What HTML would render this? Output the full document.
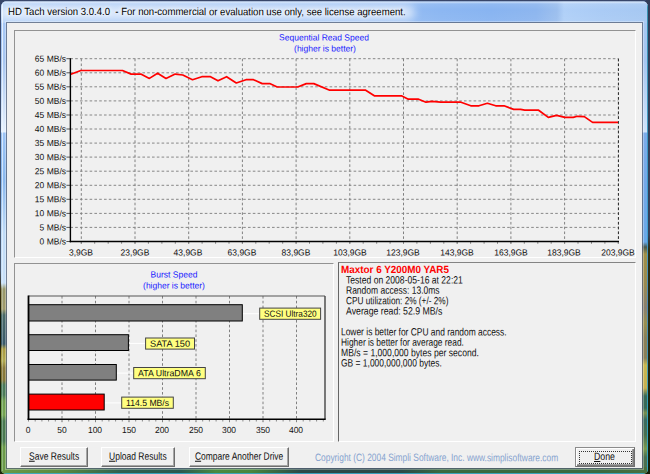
<!DOCTYPE html>
<html><head><meta charset="utf-8"><title>HD Tach</title>
<style>
html,body{margin:0;padding:0}
body{width:650px;height:474px;overflow:hidden;background:linear-gradient(#38466a 0,#3f5170 120px,#4a5a72 270px,#3a2c0a 292px,#0c1406 320px,#1a1a08 345px,#4a4010 360px,#1a2408 385px,#1a2a0a 474px);position:relative;font-family:"Liberation Sans",sans-serif;}
#bgR{position:absolute;left:646px;top:0;width:4px;height:474px;background:linear-gradient(#323c58 0,#36405a 235px,#2c2c10 250px,#20220c 380px,#141c06 474px)}
#frame{position:absolute;left:1px;top:1.25px;width:647px;height:472.35px;border-radius:6px 6px 5px 5px;overflow:hidden;background:#a8c8f0}
#fT{position:absolute;left:0;top:0;width:647px;height:23px;background:linear-gradient(rgba(60,78,115,.55) 0,rgba(255,255,255,.6) 1px,rgba(255,255,255,.3) 1.8px,rgba(255,255,255,.08) 3px,rgba(255,255,255,0) 9px,rgba(255,255,255,.06) 22px),linear-gradient(90deg,#a9caf6 0,#a0c4f5 200px,#94bcf3 400px,#8cb7f2 440px,#88b4f1 490px,#8db6ef 535px,#9cbfee 556px,#b0d0f8 563px,#aacbf5 600px,#a6c8f2 647px)}
#glow{position:absolute;left:-4px;top:4px;width:418px;height:15px;border-radius:8px;background:rgba(255,255,255,.62);filter:blur(4px)}
#fL{position:absolute;left:0;top:22px;width:7px;height:452px;background:linear-gradient(#a7c8f6 0,#a8c6f1 38px,#e6f1fe 109px,#9cc4f6 110px,#8ab8ee 158px,#c0dcf8 210px,#c8e0f8 260px,#98986a 266px,#a09a6a 286px,#4a6a68 292px,#3a5a6a 321px,#a89a40 326px,#b0a850 338px,#8a7a3a 345px,#867838 357px,#4a7a5a 362px,#4c7c58 372px,#70a050 378px,#74a450 392px,#4a7a50 398px,#4a7a50 418px,#6a9a48 424px,#6a9a48 452px)}
#fR{position:absolute;left:641px;top:22px;width:6px;height:452px;background:linear-gradient(#a6c8f2 0,#a6c6f1 38px,#d0e3fb 109px,#7cacea 110px,#74a8e8 160px,#6aa8e8 219px,#4a5a50 224px,#a09048 231px,#9a8a50 262px,#8a8070 285px,#9a9050 300px,#8a8058 315px,#8a8058 335px,#c8b850 342px,#c8b050 365px,#3a6a58 373px,#3a6a58 385px,#7a9050 390px,#3a6a60 397px,#4a7050 412px,#7a9a50 426px,#4a7050 434px,#4a7050 452px)}
#fB{position:absolute;left:0;top:466px;width:647px;height:7px;background:linear-gradient(90deg,#6a9a48 0,#5a8a40 60px,#2f6050 120px,#2a5a50 180px,#4a8a40 215px,#48863e 250px,#2a4a48 300px,#2a4a48 400px,#3a6a40 440px,#3a6a40 600px,#4a7040 647px)}
#fB:after{content:"";position:absolute;left:3px;right:3px;bottom:0;height:1px;background:#3aaed0;opacity:.85}
#fHl{position:absolute;left:0.6px;top:3px;width:1.2px;height:467px;background:linear-gradient(rgba(240,247,255,.85),rgba(240,247,255,.6) 250px,rgba(240,247,255,.3) 290px,rgba(240,247,255,.3))}
#fHr{position:absolute;left:645.6px;top:4px;width:1.4px;height:468px;background:linear-gradient(rgba(42,138,168,.9) 0,rgba(60,160,210,.9) 230px,rgba(60,140,200,.8) 300px,rgba(48,168,200,.9) 400px,rgba(48,168,200,.95) 468px)}
#client{position:absolute;left:7px;top:23px;width:635px;height:445px;background:#f0f0f0;box-shadow:0 0 0 1px rgba(62,75,98,.66),0 0 0 2px rgba(255,255,255,.3);}
.sunk{position:absolute;box-sizing:border-box;border:1px solid;border-width:1.2px 1px 1px 1.2px;border-color:#929292 #fff #fff #929292;}
svg{position:absolute;left:0;top:0}
.g{stroke:#808080;stroke-width:1;stroke-dasharray:2.6 2.2}
.gh{stroke:#7c7c7c;stroke-width:.9;stroke-dasharray:2.6 2.2}
.t{stroke:#555;stroke-width:1}
.mt{stroke:#8a8a8a;stroke-width:1}
.yl{position:absolute;left:16px;width:50px;text-align:right;transform-origin:100% 0;font-size:8.8px;line-height:12px;color:#111}
.xl{position:absolute;width:50px;text-align:center;transform-origin:50% 0;font-size:8.8px;line-height:12px;color:#111}
.ct{position:absolute;text-align:center;color:#1a1aff;font-size:8.8px;line-height:12px;width:200px;transform-origin:50% 0}
.bl{position:absolute;text-align:center;font-size:9.0px;line-height:12px;color:#111;white-space:nowrap}
.bx{position:absolute;width:40px;text-align:center;transform-origin:50% 0;font-size:8.8px;line-height:12px;color:#111}
.m{position:absolute;font-size:10.6px;line-height:14px;color:#111;white-space:pre;transform-origin:0 0}
.m u{text-decoration-thickness:0.9px;text-underline-offset:0.6px}
.btn{position:absolute;top:447px;height:19.5px;box-sizing:border-box;background:#f0f0f0;border:1px solid;border-color:#fff #6e6e6e #6e6e6e #fff;box-shadow:inset -1px -1px 0 #a6a6a6}
</style></head><body>
<div id="bgR"></div>
<div id="frame"><div id="fT"></div><div id="glow"></div><div id="fL"></div><div id="fR"></div><div id="fB"></div><div id="fHl"></div><div id="fHr"></div></div>
<div id="client"></div>
<div class="sunk" style="left:14px;top:30px;width:622px;height:228px"></div>
<div class="sunk" style="left:14px;top:262.5px;width:320px;height:179.5px"></div>
<div class="sunk" style="left:338.3px;top:262.4px;width:297.7px;height:179.6px;border-width:1.1px 1px 1px 1.8px;border-left-color:#666;border-top-color:#848484"></div>
<svg width="650" height="474" viewBox="0 0 650 474">
<line x1="66.4" y1="241.5" x2="70.4" y2="241.5" class="t"/>
<line x1="70.4" y1="227.4" x2="618.5" y2="227.4" class="gh"/>
<line x1="66.4" y1="227.4" x2="70.4" y2="227.4" class="t"/>
<line x1="70.4" y1="213.4" x2="618.5" y2="213.4" class="gh"/>
<line x1="66.4" y1="213.4" x2="70.4" y2="213.4" class="t"/>
<line x1="70.4" y1="199.3" x2="618.5" y2="199.3" class="gh"/>
<line x1="66.4" y1="199.3" x2="70.4" y2="199.3" class="t"/>
<line x1="70.4" y1="185.3" x2="618.5" y2="185.3" class="gh"/>
<line x1="66.4" y1="185.3" x2="70.4" y2="185.3" class="t"/>
<line x1="70.4" y1="171.2" x2="618.5" y2="171.2" class="gh"/>
<line x1="66.4" y1="171.2" x2="70.4" y2="171.2" class="t"/>
<line x1="70.4" y1="157.1" x2="618.5" y2="157.1" class="gh"/>
<line x1="66.4" y1="157.1" x2="70.4" y2="157.1" class="t"/>
<line x1="70.4" y1="143.1" x2="618.5" y2="143.1" class="gh"/>
<line x1="66.4" y1="143.1" x2="70.4" y2="143.1" class="t"/>
<line x1="70.4" y1="129.0" x2="618.5" y2="129.0" class="gh"/>
<line x1="66.4" y1="129.0" x2="70.4" y2="129.0" class="t"/>
<line x1="70.4" y1="115.0" x2="618.5" y2="115.0" class="gh"/>
<line x1="66.4" y1="115.0" x2="70.4" y2="115.0" class="t"/>
<line x1="70.4" y1="100.9" x2="618.5" y2="100.9" class="gh"/>
<line x1="66.4" y1="100.9" x2="70.4" y2="100.9" class="t"/>
<line x1="70.4" y1="86.8" x2="618.5" y2="86.8" class="gh"/>
<line x1="66.4" y1="86.8" x2="70.4" y2="86.8" class="t"/>
<line x1="70.4" y1="72.8" x2="618.5" y2="72.8" class="gh"/>
<line x1="66.4" y1="72.8" x2="70.4" y2="72.8" class="t"/>
<line x1="70.4" y1="58.7" x2="618.5" y2="58.7" class="gh"/>
<line x1="66.4" y1="58.7" x2="70.4" y2="58.7" class="t"/>
<line x1="81.3" y1="58.7" x2="81.3" y2="245.5" class="g"/>
<line x1="135.0" y1="58.7" x2="135.0" y2="245.5" class="g"/>
<line x1="188.7" y1="58.7" x2="188.7" y2="245.5" class="g"/>
<line x1="242.4" y1="58.7" x2="242.4" y2="245.5" class="g"/>
<line x1="296.1" y1="58.7" x2="296.1" y2="245.5" class="g"/>
<line x1="349.8" y1="58.7" x2="349.8" y2="245.5" class="g"/>
<line x1="403.5" y1="58.7" x2="403.5" y2="245.5" class="g"/>
<line x1="457.2" y1="58.7" x2="457.2" y2="245.5" class="g"/>
<line x1="510.9" y1="58.7" x2="510.9" y2="245.5" class="g"/>
<line x1="564.6" y1="58.7" x2="564.6" y2="245.5" class="g"/>
<line x1="618.3" y1="58.7" x2="618.3" y2="245.5" class="g"/>
<line x1="81.3" y1="241.5" x2="81.3" y2="243.8" class="mt"/>
<line x1="94.7" y1="241.5" x2="94.7" y2="243.8" class="mt"/>
<line x1="108.2" y1="241.5" x2="108.2" y2="243.8" class="mt"/>
<line x1="121.6" y1="241.5" x2="121.6" y2="243.8" class="mt"/>
<line x1="135.0" y1="241.5" x2="135.0" y2="243.8" class="mt"/>
<line x1="148.4" y1="241.5" x2="148.4" y2="243.8" class="mt"/>
<line x1="161.9" y1="241.5" x2="161.9" y2="243.8" class="mt"/>
<line x1="175.3" y1="241.5" x2="175.3" y2="243.8" class="mt"/>
<line x1="188.7" y1="241.5" x2="188.7" y2="243.8" class="mt"/>
<line x1="202.1" y1="241.5" x2="202.1" y2="243.8" class="mt"/>
<line x1="215.6" y1="241.5" x2="215.6" y2="243.8" class="mt"/>
<line x1="229.0" y1="241.5" x2="229.0" y2="243.8" class="mt"/>
<line x1="242.4" y1="241.5" x2="242.4" y2="243.8" class="mt"/>
<line x1="255.8" y1="241.5" x2="255.8" y2="243.8" class="mt"/>
<line x1="269.2" y1="241.5" x2="269.2" y2="243.8" class="mt"/>
<line x1="282.7" y1="241.5" x2="282.7" y2="243.8" class="mt"/>
<line x1="296.1" y1="241.5" x2="296.1" y2="243.8" class="mt"/>
<line x1="309.5" y1="241.5" x2="309.5" y2="243.8" class="mt"/>
<line x1="322.9" y1="241.5" x2="322.9" y2="243.8" class="mt"/>
<line x1="336.4" y1="241.5" x2="336.4" y2="243.8" class="mt"/>
<line x1="349.8" y1="241.5" x2="349.8" y2="243.8" class="mt"/>
<line x1="363.2" y1="241.5" x2="363.2" y2="243.8" class="mt"/>
<line x1="376.7" y1="241.5" x2="376.7" y2="243.8" class="mt"/>
<line x1="390.1" y1="241.5" x2="390.1" y2="243.8" class="mt"/>
<line x1="403.5" y1="241.5" x2="403.5" y2="243.8" class="mt"/>
<line x1="416.9" y1="241.5" x2="416.9" y2="243.8" class="mt"/>
<line x1="430.4" y1="241.5" x2="430.4" y2="243.8" class="mt"/>
<line x1="443.8" y1="241.5" x2="443.8" y2="243.8" class="mt"/>
<line x1="457.2" y1="241.5" x2="457.2" y2="243.8" class="mt"/>
<line x1="470.6" y1="241.5" x2="470.6" y2="243.8" class="mt"/>
<line x1="484.1" y1="241.5" x2="484.1" y2="243.8" class="mt"/>
<line x1="497.5" y1="241.5" x2="497.5" y2="243.8" class="mt"/>
<line x1="510.9" y1="241.5" x2="510.9" y2="243.8" class="mt"/>
<line x1="524.3" y1="241.5" x2="524.3" y2="243.8" class="mt"/>
<line x1="537.8" y1="241.5" x2="537.8" y2="243.8" class="mt"/>
<line x1="551.2" y1="241.5" x2="551.2" y2="243.8" class="mt"/>
<line x1="564.6" y1="241.5" x2="564.6" y2="243.8" class="mt"/>
<line x1="578.0" y1="241.5" x2="578.0" y2="243.8" class="mt"/>
<line x1="591.5" y1="241.5" x2="591.5" y2="243.8" class="mt"/>
<line x1="604.9" y1="241.5" x2="604.9" y2="243.8" class="mt"/>
<line x1="618.3" y1="241.5" x2="618.3" y2="243.8" class="mt"/>
<line x1="618.5" y1="58.7" x2="618.5" y2="241.5" class="g" style="stroke:#333"/>
<polyline points="70.8,74.3 80.9,70.5 122.5,70.5 131.1,74.1 140.8,74.1 149.4,78.4 157.6,73.3 166.0,78.4 175.2,74.1 182.8,75.0 192.5,79.7 201.8,76.7 210.5,76.7 218.0,80.8 226.6,76.7 236.3,83.0 246.0,79.7 253.5,79.7 262.2,83.6 269.7,83.6 277.2,87.0 297.7,87.0 306.3,83.6 313.8,83.6 329.7,90.2 365.7,90.2 374.3,95.8 401.4,95.8 408.3,99.2 418.6,99.2 426.0,102.2 432.0,101.4 440.6,102.2 461.0,102.2 470.8,105.8 479.0,105.8 487.4,103.3 495.7,105.8 504.0,105.8 513.7,109.4 520.6,109.4 524.8,110.2 538.6,110.2 548.3,117.4 556.6,115.4 565.0,117.4 573.2,117.4 577.4,116.3 584.3,116.6 592.6,122.4 618.0,122.4" fill="none" stroke="#f00" stroke-width="1.7" stroke-linejoin="round"/>
<line x1="70.4" y1="58.2" x2="70.4" y2="242.3" stroke="#000" stroke-width="1.4"/>
<line x1="69.7" y1="241.5" x2="619.0" y2="241.5" stroke="#000" stroke-width="1.6"/>
<line x1="62.0" y1="296" x2="62.0" y2="422.2" class="g"/>
<line x1="95.5" y1="296" x2="95.5" y2="422.2" class="g"/>
<line x1="129.0" y1="296" x2="129.0" y2="422.2" class="g"/>
<line x1="162.5" y1="296" x2="162.5" y2="422.2" class="g"/>
<line x1="196.0" y1="296" x2="196.0" y2="422.2" class="g"/>
<line x1="229.5" y1="296" x2="229.5" y2="422.2" class="g"/>
<line x1="263.0" y1="296" x2="263.0" y2="422.2" class="g"/>
<line x1="296.5" y1="296" x2="296.5" y2="422.2" class="g"/>
<line x1="28.5" y1="419.2" x2="28.5" y2="421.5" class="mt"/>
<line x1="35.2" y1="419.2" x2="35.2" y2="421.5" class="mt"/>
<line x1="41.9" y1="419.2" x2="41.9" y2="421.5" class="mt"/>
<line x1="48.6" y1="419.2" x2="48.6" y2="421.5" class="mt"/>
<line x1="55.3" y1="419.2" x2="55.3" y2="421.5" class="mt"/>
<line x1="62.0" y1="419.2" x2="62.0" y2="421.5" class="mt"/>
<line x1="68.7" y1="419.2" x2="68.7" y2="421.5" class="mt"/>
<line x1="75.4" y1="419.2" x2="75.4" y2="421.5" class="mt"/>
<line x1="82.1" y1="419.2" x2="82.1" y2="421.5" class="mt"/>
<line x1="88.8" y1="419.2" x2="88.8" y2="421.5" class="mt"/>
<line x1="95.5" y1="419.2" x2="95.5" y2="421.5" class="mt"/>
<line x1="102.2" y1="419.2" x2="102.2" y2="421.5" class="mt"/>
<line x1="108.9" y1="419.2" x2="108.9" y2="421.5" class="mt"/>
<line x1="115.6" y1="419.2" x2="115.6" y2="421.5" class="mt"/>
<line x1="122.3" y1="419.2" x2="122.3" y2="421.5" class="mt"/>
<line x1="129.0" y1="419.2" x2="129.0" y2="421.5" class="mt"/>
<line x1="135.7" y1="419.2" x2="135.7" y2="421.5" class="mt"/>
<line x1="142.4" y1="419.2" x2="142.4" y2="421.5" class="mt"/>
<line x1="149.1" y1="419.2" x2="149.1" y2="421.5" class="mt"/>
<line x1="155.8" y1="419.2" x2="155.8" y2="421.5" class="mt"/>
<line x1="162.5" y1="419.2" x2="162.5" y2="421.5" class="mt"/>
<line x1="169.2" y1="419.2" x2="169.2" y2="421.5" class="mt"/>
<line x1="175.9" y1="419.2" x2="175.9" y2="421.5" class="mt"/>
<line x1="182.6" y1="419.2" x2="182.6" y2="421.5" class="mt"/>
<line x1="189.3" y1="419.2" x2="189.3" y2="421.5" class="mt"/>
<line x1="196.0" y1="419.2" x2="196.0" y2="421.5" class="mt"/>
<line x1="202.7" y1="419.2" x2="202.7" y2="421.5" class="mt"/>
<line x1="209.4" y1="419.2" x2="209.4" y2="421.5" class="mt"/>
<line x1="216.1" y1="419.2" x2="216.1" y2="421.5" class="mt"/>
<line x1="222.8" y1="419.2" x2="222.8" y2="421.5" class="mt"/>
<line x1="229.5" y1="419.2" x2="229.5" y2="421.5" class="mt"/>
<line x1="236.2" y1="419.2" x2="236.2" y2="421.5" class="mt"/>
<line x1="242.9" y1="419.2" x2="242.9" y2="421.5" class="mt"/>
<line x1="249.6" y1="419.2" x2="249.6" y2="421.5" class="mt"/>
<line x1="256.3" y1="419.2" x2="256.3" y2="421.5" class="mt"/>
<line x1="263.0" y1="419.2" x2="263.0" y2="421.5" class="mt"/>
<line x1="269.7" y1="419.2" x2="269.7" y2="421.5" class="mt"/>
<line x1="276.4" y1="419.2" x2="276.4" y2="421.5" class="mt"/>
<line x1="283.1" y1="419.2" x2="283.1" y2="421.5" class="mt"/>
<line x1="289.8" y1="419.2" x2="289.8" y2="421.5" class="mt"/>
<line x1="296.5" y1="419.2" x2="296.5" y2="421.5" class="mt"/>
<line x1="303.2" y1="419.2" x2="303.2" y2="421.5" class="mt"/>
<line x1="309.9" y1="419.2" x2="309.9" y2="421.5" class="mt"/>
<line x1="316.6" y1="419.2" x2="316.6" y2="421.5" class="mt"/>
<line x1="323.3" y1="419.2" x2="323.3" y2="421.5" class="mt"/>
<line x1="28.5" y1="296" x2="325" y2="296" stroke="#555" stroke-width="1.2"/>
<line x1="325" y1="296" x2="325" y2="419.2" stroke="#444" stroke-width="1.4"/>
<line x1="242.8" y1="313.7" x2="259.2" y2="313.7" stroke="#fff" stroke-width="1"/>
<rect x="28.5" y="304.7" width="213.8" height="16.3" fill="#808080" stroke="#000" stroke-width="1"/>
<rect x="259.7" y="308.1" width="60.9" height="11.2" fill="#ffff80" stroke="#444" stroke-width="1"/>
<line x1="128.9" y1="343.4" x2="145.1" y2="343.4" stroke="#fff" stroke-width="1"/>
<rect x="28.5" y="334.7" width="99.9" height="15.8" fill="#808080" stroke="#000" stroke-width="1"/>
<rect x="145.6" y="338.0" width="48.9" height="11.1" fill="#ffff80" stroke="#444" stroke-width="1"/>
<line x1="116.8" y1="373.1" x2="133.2" y2="373.1" stroke="#fff" stroke-width="1"/>
<rect x="28.5" y="364.5" width="87.8" height="15.6" fill="#808080" stroke="#000" stroke-width="1"/>
<rect x="133.7" y="367.5" width="71.6" height="11.2" fill="#ffff80" stroke="#444" stroke-width="1"/>
<line x1="104.7" y1="402.9" x2="121.2" y2="402.9" stroke="#fff" stroke-width="1"/>
<rect x="28.5" y="394.1" width="75.7" height="15.9" fill="#ff0000" stroke="#000" stroke-width="1"/>
<rect x="121.7" y="397.1" width="51.6" height="11.2" fill="#ffff80" stroke="#444" stroke-width="1"/>
<line x1="28.5" y1="295.5" x2="28.5" y2="420.0" stroke="#000" stroke-width="1.8"/>
<line x1="27.6" y1="419.2" x2="325.7" y2="419.2" stroke="#000" stroke-width="1.6"/>
</svg>
<div class="ct" style="left:223.8px;top:31px;transform:matrix(0.9659,0.0006,0,1,0,0.40)">Sequential Read Speed</div>
<div class="ct" style="left:225px;top:42px;transform:matrix(0.9659,0.0006,0,1,0,0.60)">(higher is better)</div>
<div class="ct" style="left:74px;top:268px;transform:matrix(0.9659,0.0006,0,1,0,0.60)">Burst Speed</div>
<div class="ct" style="left:74.2px;top:279px;transform:matrix(0.9659,0.0006,0,1,0,0.60)">(higher is better)</div>
<div class="yl" style="top:235px;transform:matrix(0.9659,0.0006,0,1,0,0.50)">0 MB/s</div><div class="yl" style="top:221px;transform:matrix(0.9659,0.0006,0,1,0,0.44)">5 MB/s</div><div class="yl" style="top:207px;transform:matrix(0.9659,0.0006,0,1,0,0.38)">10 MB/s</div><div class="yl" style="top:193px;transform:matrix(0.9659,0.0006,0,1,0,0.32)">15 MB/s</div><div class="yl" style="top:179px;transform:matrix(0.9659,0.0006,0,1,0,0.26)">20 MB/s</div><div class="yl" style="top:165px;transform:matrix(0.9659,0.0006,0,1,0,0.20)">25 MB/s</div><div class="yl" style="top:151px;transform:matrix(0.9659,0.0006,0,1,0,0.14)">30 MB/s</div><div class="yl" style="top:137px;transform:matrix(0.9659,0.0006,0,1,0,0.08)">35 MB/s</div><div class="yl" style="top:123px;transform:matrix(0.9659,0.0006,0,1,0,0.02)">40 MB/s</div><div class="yl" style="top:108px;transform:matrix(0.9659,0.0006,0,1,0,0.96)">45 MB/s</div><div class="yl" style="top:94px;transform:matrix(0.9659,0.0006,0,1,0,0.90)">50 MB/s</div><div class="yl" style="top:80px;transform:matrix(0.9659,0.0006,0,1,0,0.84)">55 MB/s</div><div class="yl" style="top:66px;transform:matrix(0.9659,0.0006,0,1,0,0.78)">60 MB/s</div><div class="yl" style="top:52px;transform:matrix(0.9659,0.0006,0,1,0,0.72)">65 MB/s</div>
<div class="xl" style="left:56.0px;top:246px;transform:matrix(0.9659,0.0006,0,1,0,0.50)">3,9GB</div><div class="xl" style="left:109.7px;top:246px;transform:matrix(0.9659,0.0006,0,1,0,0.50)">23,9GB</div><div class="xl" style="left:163.4px;top:246px;transform:matrix(0.9659,0.0006,0,1,0,0.50)">43,9GB</div><div class="xl" style="left:217.1px;top:246px;transform:matrix(0.9659,0.0006,0,1,0,0.50)">63,9GB</div><div class="xl" style="left:270.8px;top:246px;transform:matrix(0.9659,0.0006,0,1,0,0.50)">83,9GB</div><div class="xl" style="left:324.5px;top:246px;transform:matrix(0.9659,0.0006,0,1,0,0.50)">103,9GB</div><div class="xl" style="left:378.2px;top:246px;transform:matrix(0.9659,0.0006,0,1,0,0.50)">123,9GB</div><div class="xl" style="left:431.9px;top:246px;transform:matrix(0.9659,0.0006,0,1,0,0.50)">143,9GB</div><div class="xl" style="left:485.6px;top:246px;transform:matrix(0.9659,0.0006,0,1,0,0.50)">163,9GB</div><div class="xl" style="left:539.3px;top:246px;transform:matrix(0.9659,0.0006,0,1,0,0.50)">183,9GB</div><div class="xl" style="left:593.0px;top:246px;transform:matrix(0.9659,0.0006,0,1,0,0.50)">203,9GB</div>
<div class="bx" style="left:8.2px;top:424px;transform:matrix(0.9659,0.0006,0,1,0,0.10)">0</div><div class="bx" style="left:41.7px;top:424px;transform:matrix(0.9659,0.0006,0,1,0,0.10)">50</div><div class="bx" style="left:75.2px;top:424px;transform:matrix(0.9659,0.0006,0,1,0,0.10)">100</div><div class="bx" style="left:108.7px;top:424px;transform:matrix(0.9659,0.0006,0,1,0,0.10)">150</div><div class="bx" style="left:142.2px;top:424px;transform:matrix(0.9659,0.0006,0,1,0,0.10)">200</div><div class="bx" style="left:175.7px;top:424px;transform:matrix(0.9659,0.0006,0,1,0,0.10)">250</div><div class="bx" style="left:209.2px;top:424px;transform:matrix(0.9659,0.0006,0,1,0,0.10)">300</div><div class="bx" style="left:242.7px;top:424px;transform:matrix(0.9659,0.0006,0,1,0,0.10)">350</div><div class="bx" style="left:276.2px;top:424px;transform:matrix(0.9659,0.0006,0,1,0,0.10)">400</div>
<div class="btn" style="left:20.2px;width:68px"></div>
<div class="btn" style="left:100.5px;width:74.2px"></div>
<div class="btn" style="left:189px;width:100px"></div>
<div class="btn" style="left:575px;width:60px;border-color:#8c8c8c #707070 #707070 #8c8c8c;box-shadow:inset 1px 1px 0 #fff,inset -1px -1px 0 #7c7c7c,inset -2px -2px 0 #a0a0a0"><span style="position:absolute;left:2.5px;top:2.5px;right:2.5px;bottom:2px;border:1px dotted #333"></span></div>
<div class="m" id="i0" style="left:341.10px;top:263px;transform:matrix(0.9508,0.0006,0,1,0,0.00);color:#f00;font-size:10.4px;"><b>Maxtor 6 Y200M0 YAR5</b></div><div class="m" id="i1" style="left:346.10px;top:272px;transform:matrix(0.8094,0.0006,0,1,0,0.39);">Tested on 2008-05-16 at 22:21</div><div class="m" id="i2" style="left:346.10px;top:282px;transform:matrix(0.8028,0.0006,0,1,0,0.78);">Random access: 13.0ms</div><div class="m" id="i3" style="left:346.10px;top:293px;transform:matrix(0.7782,0.0006,0,1,0,0.17);">CPU utilization: 2% (+/- 2%)</div><div class="m" id="i4" style="left:345.50px;top:303px;transform:matrix(0.8239,0.0006,0,1,0,0.56);">Average read: 52.9 MB/s</div><div class="m" id="i6" style="left:341.10px;top:324px;transform:matrix(0.7945,0.0006,0,1,0,0.34);">Lower is better for CPU and random access.</div><div class="m" id="i7" style="left:341.10px;top:334px;transform:matrix(0.7905,0.0006,0,1,0,0.73);">Higher is better for average read.</div><div class="m" id="i8" style="left:341.10px;top:345px;transform:matrix(0.8116,0.0006,0,1,0,0.12);">MB/s = 1,000,000 bytes per second.</div><div class="m" id="i9" style="left:341.10px;top:355px;transform:matrix(0.7978,0.0006,0,1,0,0.51);">GB = 1,000,000,000 bytes.</div><div class="m" id="cp" style="left:314.80px;top:450px;transform:matrix(0.7913,0.0006,0,1,0,0.00);color:#86a3cf;">Copyright (C) 2004 Simpli Software, Inc. www.simplisoftware.com</div><div class="m" id="b1" style="left:29.00px;top:448px;transform:matrix(0.8040,0.0006,0,1,0,0.80);"><u>S</u>ave Results</div><div class="m" id="b2" style="left:108.50px;top:448px;transform:matrix(0.8030,0.0006,0,1,0,0.80);"><u>U</u>pload Results</div><div class="m" id="b3" style="left:194.80px;top:448px;transform:matrix(0.7976,0.0006,0,1,0,0.80);"><u>C</u>ompare Another Drive</div><div class="m" id="b4" style="left:594.00px;top:449px;transform:matrix(0.8286,0.0006,0,1,0,0.00);"><u>D</u>one</div><div class="m" id="tt" style="left:8.00px;top:5px;transform:matrix(0.9212,0.0006,0,1,0,0.00);font-size:10.4px;line-height:14px;color:#000;text-shadow:0 0 3px rgba(255,255,255,.95),0 0 6px rgba(255,255,255,.9),0 0 10px rgba(255,255,255,.8);">HD Tach version 3.0.4.0  - For non-commercial or evaluation use only, see license agreement.</div><div class="m" id="l0" style="left:263.80px;top:307px;transform:matrix(0.9160,0.0006,0,1,0,0.80);font-size:9.0px;line-height:12px;">SCSI Ultra320</div><div class="m" id="l1" style="left:150.00px;top:337px;transform:matrix(1.0229,0.0006,0,1,0,0.65);font-size:9.0px;line-height:12px;">SATA 150</div><div class="m" id="l2" style="left:138.10px;top:367px;transform:matrix(0.9784,0.0006,0,1,0,0.20);font-size:9.0px;line-height:12px;">ATA UltraDMA 6</div><div class="m" id="l3" style="left:125.95px;top:396px;transform:matrix(0.9608,0.0006,0,1,0,0.90);font-size:9.0px;line-height:12px;">114.5 MB/s</div>
</body></html>
